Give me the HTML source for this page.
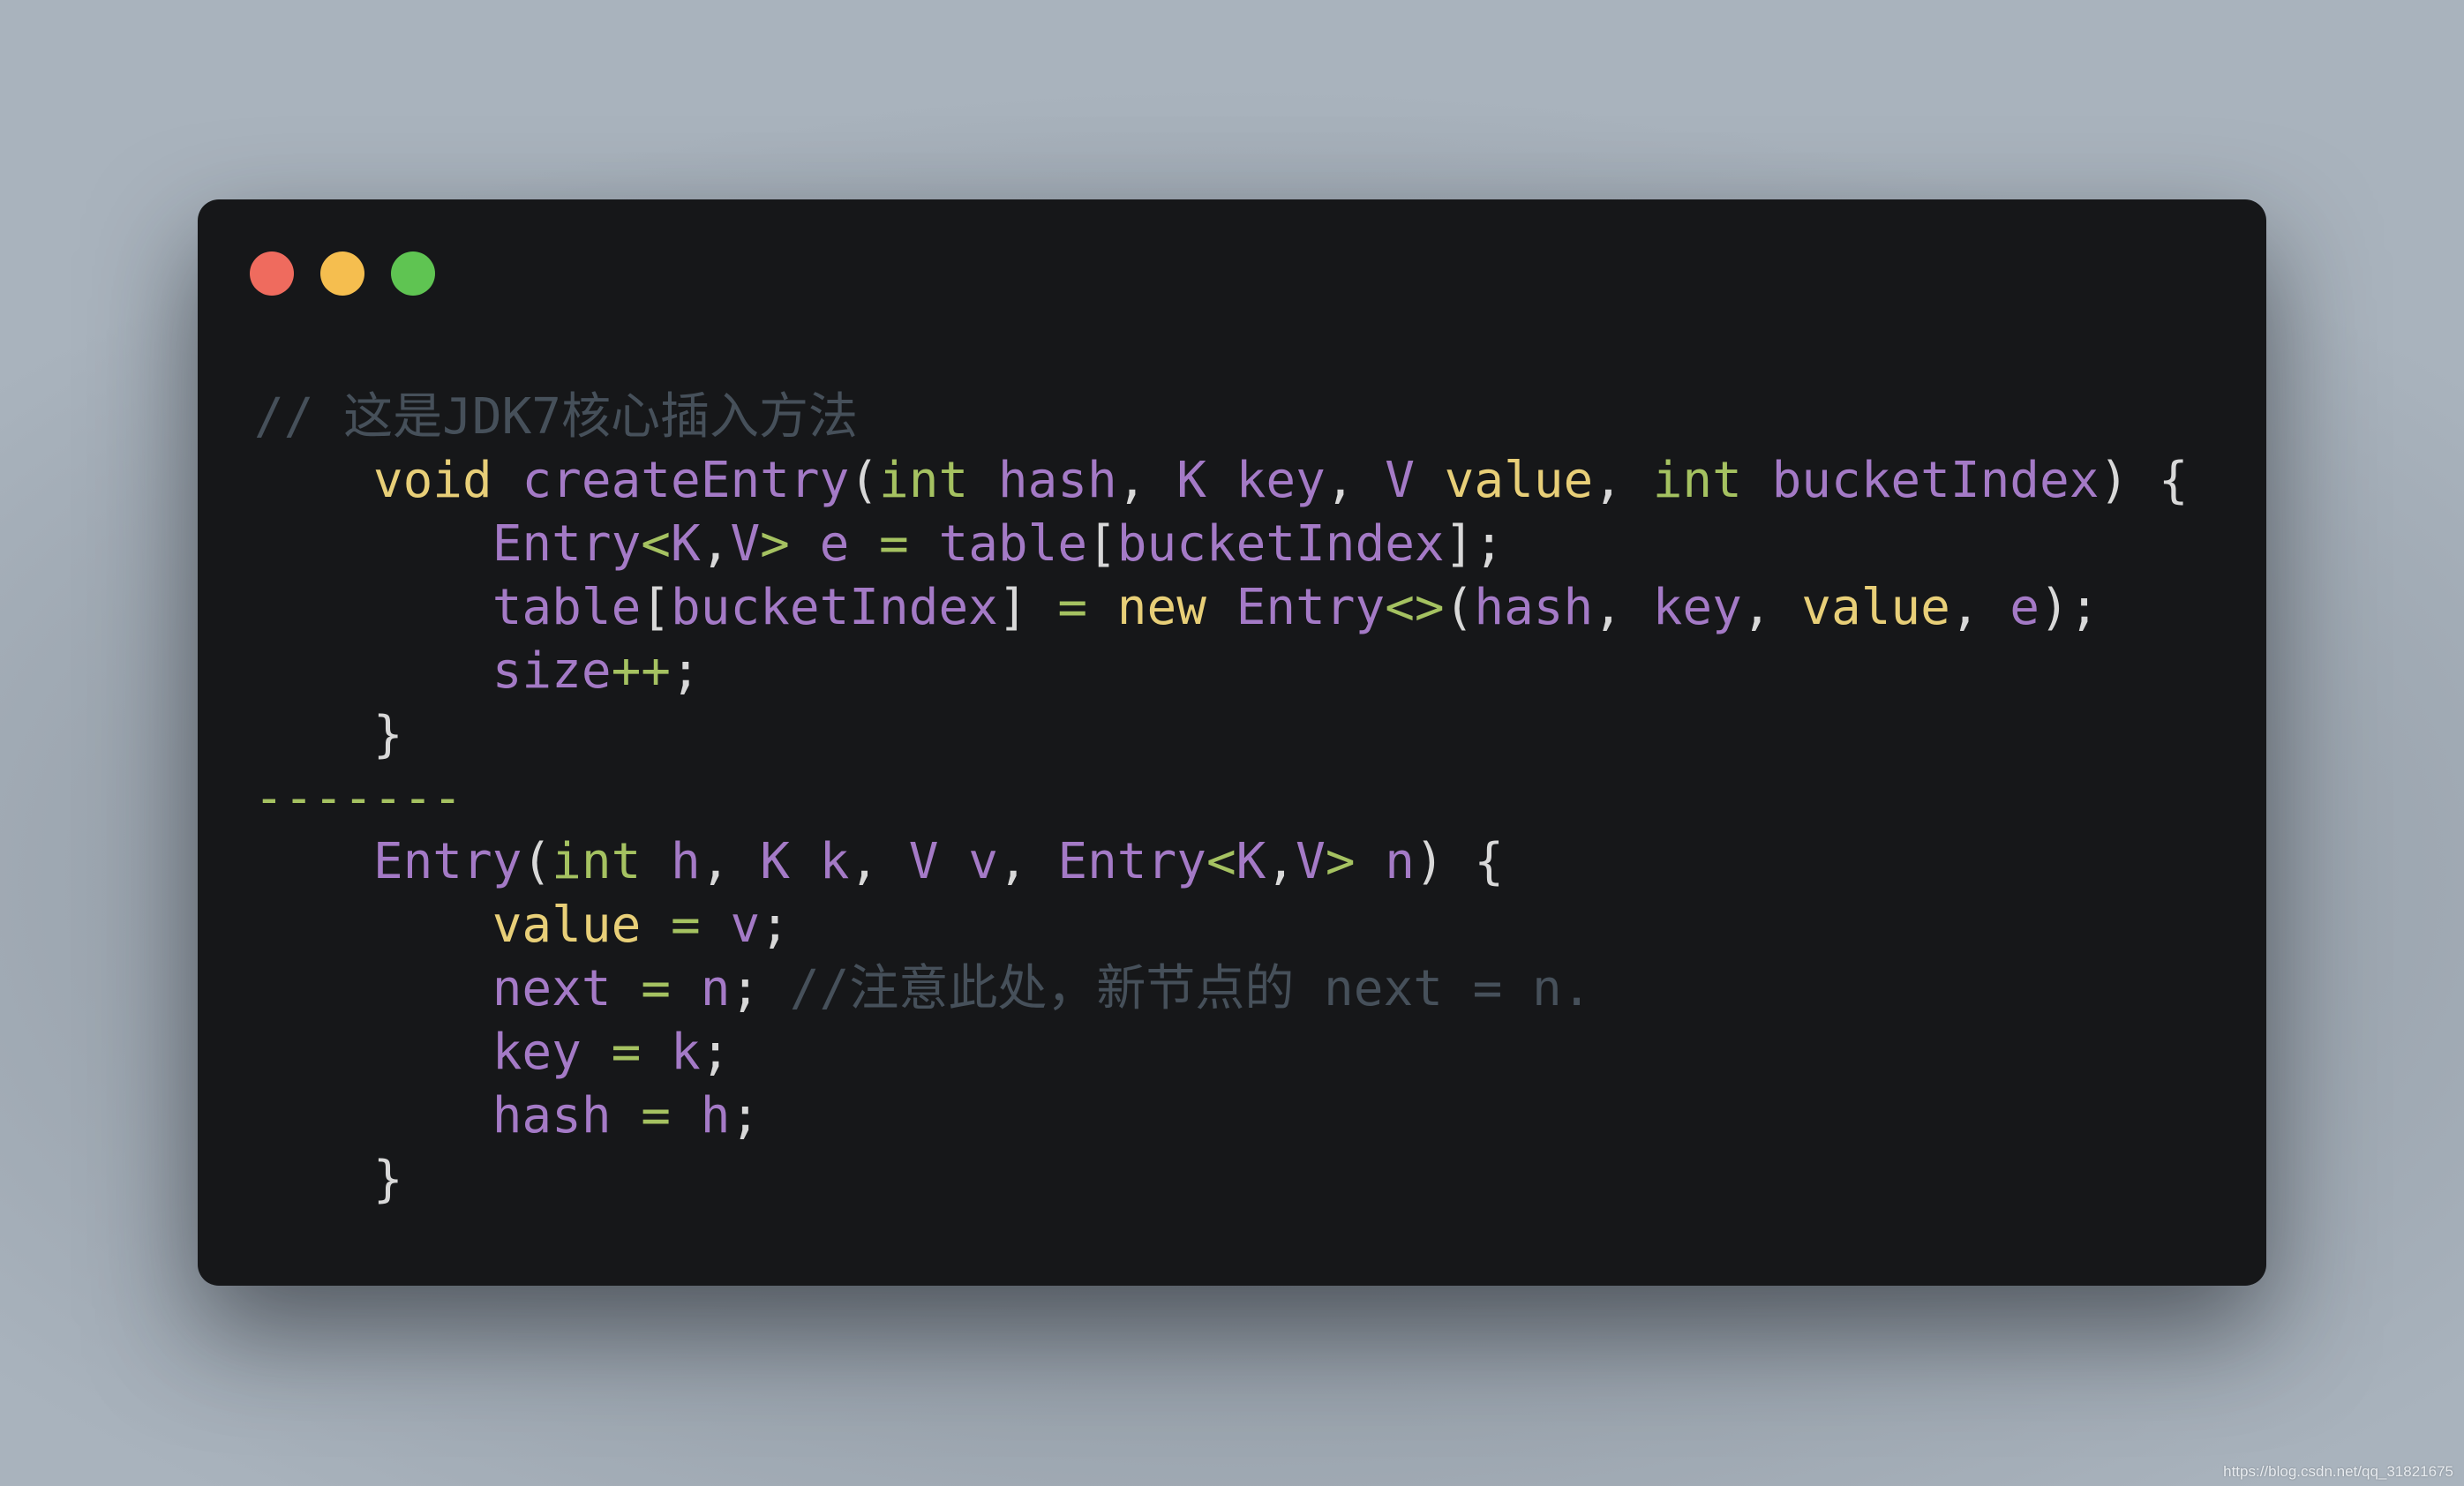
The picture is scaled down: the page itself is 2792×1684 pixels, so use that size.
<!DOCTYPE html>
<html><head><meta charset="utf-8"><style>
html,body{margin:0;padding:0}
body{width:2792px;height:1684px;position:relative;overflow:hidden;
background:radial-gradient(ellipse 1800px 900px at 1396px 1000px,#7a828c 0%,#929ba5 45%,#a9b3bd 100%),#a9b3bd;}
.win{position:absolute;left:224px;top:226px;width:2344px;height:1231px;background:#161719;border-radius:24px;
box-shadow:0 50px 120px rgba(20,24,30,.55);}
.dot{position:absolute;top:285px;width:50px;height:50px;border-radius:50%}
pre{position:absolute;left:288px;top:437px;margin:0;font-family:"DejaVu Sans Mono","Liberation Mono","Noto Sans CJK SC",monospace;
font-size:56px;line-height:72px;color:#d8d8d8;white-space:pre}
.p{color:#a47ac6}.g{color:#a5c261}.y{color:#e8cf78}.c{color:#46505a}
.cj{font-family:"Noto Sans CJK SC",sans-serif;line-height:0}
.wm{position:absolute;right:12px;bottom:6px;font-family:"Liberation Sans",sans-serif;font-size:17px;color:#e8ecf0;text-shadow:0 0 2px rgba(0,0,0,.3)}
</style></head><body>
<div class="win"></div>
<div class="dot" style="left:283px;background:#ef6b5e"></div>
<div class="dot" style="left:363px;background:#f5be4f"></div>
<div class="dot" style="left:443px;background:#5fc452"></div>
<pre><span class="c">// <span class="cj">这是</span>JDK7<span class="cj">核心插入方法</span></span>
    <span class="y">void</span> <span class="p">createEntry</span>(<span class="g">int</span> <span class="p">hash</span>, <span class="p">K</span> <span class="p">key</span>, <span class="p">V</span> <span class="y">value</span>, <span class="g">int</span> <span class="p">bucketIndex</span>) {
        <span class="p">Entry</span><span class="g">&lt;</span><span class="p">K</span>,<span class="p">V</span><span class="g">&gt;</span> <span class="p">e</span> <span class="g">=</span> <span class="p">table</span>[<span class="p">bucketIndex</span>];
        <span class="p">table</span>[<span class="p">bucketIndex</span>] <span class="g">=</span> <span class="y">new</span> <span class="p">Entry</span><span class="g">&lt;&gt;</span>(<span class="p">hash</span>, <span class="p">key</span>, <span class="y">value</span>, <span class="p">e</span>);
        <span class="p">size</span><span class="g">++</span>;
    }
<span class="g">-------</span>
    <span class="p">Entry</span>(<span class="g">int</span> <span class="p">h</span>, <span class="p">K</span> <span class="p">k</span>, <span class="p">V</span> <span class="p">v</span>, <span class="p">Entry</span><span class="g">&lt;</span><span class="p">K</span>,<span class="p">V</span><span class="g">&gt;</span> <span class="p">n</span>) {
        <span class="y">value</span> <span class="g">=</span> <span class="p">v</span>;
        <span class="p">next</span> <span class="g">=</span> <span class="p">n</span>; <span class="c">//<span class="cj">注意此处，新节点的</span> next = n.</span>
        <span class="p">key</span> <span class="g">=</span> <span class="p">k</span>;
        <span class="p">hash</span> <span class="g">=</span> <span class="p">h</span>;
    }</pre>
<div class="wm">https://blog.csdn.net/qq_31821675</div>
</body></html>
